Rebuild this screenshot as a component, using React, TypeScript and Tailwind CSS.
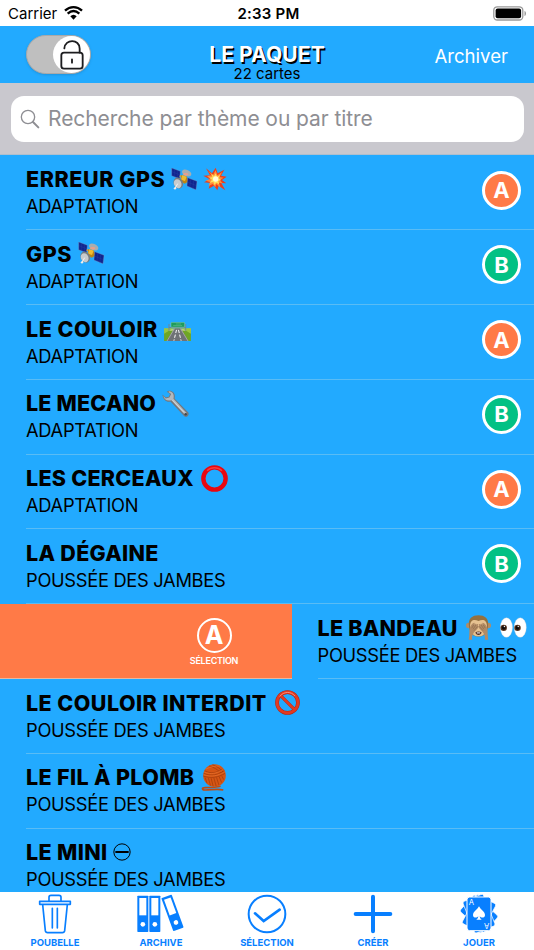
import React from 'react';

type Badge = 'A' | 'B';

type Card = {
  title: string;
  theme: string;
  icons?: React.ReactNode;
  badge?: Badge;
  swiped?: boolean;
  tracking: string;
};

const Satellite = () => (
  <svg className="ml-[6px] h-[23px] w-[27px] shrink-0" viewBox="0 0 81 69">
    <path d="M2 0 28 10 26 32 2 23Z" fill="#10248f" stroke="#8b94b5" strokeWidth="1" />
    <path d="M3 11 27 21M11 4v23M19 7v23" stroke="#2c46a8" strokeWidth="1" />
    <path d="m26 23 26 15" stroke="#c6a04a" strokeWidth="5" />
    <ellipse cx="47" cy="15" rx="15" ry="9" transform="rotate(25 47 15)" fill="#a9adb0" />
    <ellipse cx="44" cy="19" rx="8" ry="4" fill="#e9a18c" />
    <path d="m31 21 17 5 3 15-10 6-12-7Z" fill="#bd8413" />
    <path d="m34 21 13 5-5 13-12-4Z" fill="#efbb31" />
    <path d="M50 29 78 40 75 65 48 54Z" fill="#10248f" stroke="#8b94b5" strokeWidth="1" />
    <path d="m49 42 27 11M59 33l-2 24M68 37l-2 24" stroke="#2c46a8" strokeWidth="1" />
    <ellipse cx="22" cy="45" rx="14" ry="17" transform="rotate(-25 22 45)" fill="#777d80" />
    <ellipse cx="20" cy="47" rx="11" ry="14" transform="rotate(-25 20 47)" fill="#c8cbcd" />
    <path d="m20 47-8 14" stroke="#f3f3f3" strokeWidth="3" />
    <circle cx="12" cy="61" r="3.5" fill="#eee" />
  </svg>
);

const Boom = () => (
  <svg className="ml-[5px] h-[24px] w-[24px] shrink-0" viewBox="0 0 72 72">
    <path d="m9 4 18 15L38 2l6 17L64 8 54 26l17 3-14 10 13 10-15-1 12 22-20-14-4 14-10-14-16 9 5-17-19-2 17-9L1 26l20-1Z" fill="#ee3d1c" />
    <path d="m15 11 15 13 8-14 5 15 15-10-9 15 13 2-12 7 9 10-12-2 6 15-13-11-3 10-8-10-12 6 4-12-13-4 14-5-10-9 14-2Z" fill="#ff8d3a" />
    <path d="m25 19 8 9 5-9 4 10 10-5-6 10 9 5-9 3 3 10-9-5-6 7-3-9-11 2 7-9-8-6 9-2Z" fill="#ffdf5c" />
    <circle cx="38" cy="36" r="8" fill="#fffbdc" />
  </svg>
);

const Motorway = () => (
  <svg className="ml-[6px] mt-[5px] h-[19px] w-[27px] shrink-0" viewBox="0 0 82 58">
    <path d="M0 20h82v38H0Z" fill="#6fa626" />
    <path d="M0 20h82v7H0Z" fill="#b7cf7c" />
    <path d="M0 20h26L0 36ZM82 20H56l26 16Z" fill="#9bc641" />
    <path d="M31 20h20l24 38H7Z" fill="#6f7276" />
    <path d="m32 20-23 38M50 20l23 38" stroke="#c1c3bd" strokeWidth="2" />
    <path d="m38 24-8 33M44 24l8 33" stroke="#fff" strokeWidth="3" strokeDasharray="10 5" />
    <path d="M15 6v21M66 6v21M15 17h51" fill="none" stroke="#6e8795" strokeWidth="3" />
    <rect x="21" y="1" width="42" height="15" rx="2" fill="#1f9c5c" stroke="#9ad6bd" strokeWidth="1.5" />
    <path d="M36 6h16M28 11h27" stroke="#66bb8d" strokeWidth="2" />
  </svg>
);

const WrenchIcon = () => (
  <svg className="ml-[6px] h-[27px] w-[27px] shrink-0" viewBox="0 0 80 80">
    <path d="M20 2C33 1 41 12 37 25L78 67c4 8-5 16-12 11L25 34C13 37 3 28 1 13l10 9 9-2 4-8-10-7Z" fill="#73787e" />
    <path d="M21 4c11 1 16 10 13 22l39 42-5 5-40-43C15 34 6 28 4 18l7 7 11-3 5-10-8-6Z" fill="#b3b8bd" />
    <path d="m31 30 34 36" stroke="#d7dbdd" strokeWidth="2.5" />
    <circle cx="70" cy="72" r="3.5" fill="#44494d" />
  </svg>
);

const Ring = () => (
  <svg className="ml-[7px] h-[27px] w-[27px] shrink-0" viewBox="0 0 80 80">
    <circle cx="40" cy="40" r="33" fill="none" stroke="#e90710" strokeWidth="13" />
    <path d="M18 17C29 5 51 5 62 17" fill="none" stroke="#fa3b3b" strokeWidth="4" />
  </svg>
);

const Monkey = () => (
  <svg className="ml-[8px] h-[25px] w-[25px] shrink-0" viewBox="0 0 74 74">
    <circle cx="8" cy="31" r="8" fill="#b08d68" />
    <circle cx="66" cy="31" r="8" fill="#b08d68" />
    <path d="M9 34C5 10 19 1 37 1s32 9 28 33c-2 21-12 30-28 30S11 55 9 34Z" fill="#94703f" />
    <path d="M12 33c0-19 13-22 25-15 12-7 25-4 25 15 0 18-9 30-25 30S12 51 12 33Z" fill="#e6c291" />
    <path d="M8 73c3-14 1-25 3-34 3-9 8-15 13-16 3 0 2 4-1 7 5-6 9-5 7-1 4-4 8-2 5 3 3 0 3 4 0 7L24 51c-5 7-7 13-6 22Z" fill="#b28b65" />
    <path d="M66 73c-3-14-1-25-3-34-3-9-8-15-13-16-3 0-2 4 1 7-5-6-9-5-7-1-4-4-8-2-5 3-3 0-3 4 0 7l11 12c5 7 7 13 6 22Z" fill="#b28b65" />
    <path d="M23 29 17 39M29 30l-8 12M34 34 24 46M51 29l6 10M45 30l8 12M40 34l10 12" stroke="#80603f" strokeWidth="1.5" />
    <path d="M28 51c5-3 13-3 18 0-1 11-17 11-18 0Z" fill="#4f2b22" />
    <path d="M32 53h10" stroke="#fff" strokeWidth="3" />
  </svg>
);

const Eyes = () => (
  <svg className="ml-[9px] h-[21px] w-[27px] shrink-0" viewBox="0 0 80 62">
    <ellipse cx="19" cy="31" rx="18" ry="29" fill="#fff" stroke="#cbd0d1" />
    <ellipse cx="60" cy="31" rx="18" ry="29" fill="#fff" stroke="#cbd0d1" />
    <circle cx="11" cy="32" r="9.5" fill="#57321c" />
    <circle cx="52" cy="32" r="9.5" fill="#57321c" />
    <circle cx="11" cy="32" r="6" fill="#130b08" />
    <circle cx="52" cy="32" r="6" fill="#130b08" />
    <circle cx="13" cy="28" r="2" fill="#fff" />
    <circle cx="54" cy="28" r="2" fill="#fff" />
  </svg>
);

const Forbidden = () => (
  <svg className="ml-[8px] h-[25px] w-[25px] shrink-0" viewBox="0 0 74 74">
    <circle cx="37" cy="37" r="31" fill="none" stroke="#b8240f" strokeWidth="11" />
    <path d="m16 16 42 42" stroke="#b8240f" strokeWidth="9" />
    <circle cx="37" cy="37" r="31" fill="none" stroke="#e23a22" strokeWidth="8" />
    <path d="m16 16 42 42" stroke="#e23a22" strokeWidth="7" />
    <path d="M14 19C25 4 48 3 59 18" fill="none" stroke="#ff9b87" strokeWidth="2.5" />
  </svg>
);

const Yarn = () => (
  <svg className="ml-[7px] h-[27px] w-[26px] shrink-0" viewBox="0 0 77 80">
    <path d="M58 66c-14 4-34 4-46 4-10 0-10 6-2 7 18 1 36-5 56 0" fill="none" stroke="#c24a10" strokeWidth="5" />
    <circle cx="40" cy="34" r="33.5" fill="#d65514" />
    <path d="M11 20c18 10 34 6 52-4M8 28c22 9 42 5 61-8M7 36c24 7 44 4 64-8" fill="none" stroke="#9c380a" strokeWidth="2" />
    <path d="M22 42l6 22M30 42l6 24M38 41l7 25M46 40l7 22M54 38l7 17M62 36l5 10M12 40l6 17" fill="none" stroke="#9c380a" strokeWidth="2" />
    <path d="M24 6c12 3 26 10 38 24M34 2c12 4 24 12 33 24" fill="none" stroke="#9c380a" strokeWidth="2" />
    <path d="M14 15C29 8 44 5 56 6M10 24c20 8 36 4 54-7M9 32c22 7 42 3 61-9" fill="none" stroke="#e8742f" strokeWidth="2" />
  </svg>
);

const MinusCircle = () => (
  <svg className="ml-[6px] h-[18px] w-[18px] shrink-0" viewBox="0 0 54 54">
    <circle cx="27" cy="27" r="24.5" fill="none" stroke="#000" strokeWidth="3" />
    <path d="M7 27h40" stroke="#000" strokeWidth="6" />
  </svg>
);

const cards: Card[] = [
  { title: 'ERREUR GPS', theme: 'ADAPTATION', badge: 'A', icons: <><Satellite /><Boom /></>, tracking: 'tracking-[0.56px]' },
  { title: 'GPS', theme: 'ADAPTATION', badge: 'B', icons: <Satellite />, tracking: 'tracking-[0.5px]' },
  { title: 'LE COULOIR', theme: 'ADAPTATION', badge: 'A', icons: <Motorway />, tracking: 'tracking-[0.5px]' },
  { title: 'LE MECANO', theme: 'ADAPTATION', badge: 'B', icons: <WrenchIcon />, tracking: 'tracking-[0.2px]' },
  { title: 'LES CERCEAUX', theme: 'ADAPTATION', badge: 'A', icons: <Ring />, tracking: 'tracking-[0.26px]' },
  { title: 'LA DÉGAINE', theme: 'POUSSÉE DES JAMBES', badge: 'B', tracking: 'tracking-[0.3px]' },
  { title: 'LE BANDEAU', theme: 'POUSSÉE DES JAMBES', swiped: true, icons: <><Monkey /><Eyes /></>, tracking: 'tracking-[0.25px]' },
  { title: 'LE COULOIR INTERDIT', theme: 'POUSSÉE DES JAMBES', icons: <Forbidden />, tracking: 'tracking-[0.45px]' },
  { title: 'LE FIL À PLOMB', theme: 'POUSSÉE DES JAMBES', icons: <Yarn />, tracking: 'tracking-[0.35px]' },
  { title: 'LE MINI', theme: 'POUSSÉE DES JAMBES', icons: <MinusCircle />, tracking: 'tracking-[0.35px]' },
];

const badgeColors = {
  A: 'bg-[#ff7a47]',
  B: 'bg-[#02c184]',
};

const CardRow = ({ card }: { card: Card }) => (
  <div className="flex h-[74.8px] shrink-0 overflow-hidden">
    {card.swiped && (
      <div className="flex w-[291.5px] shrink-0 justify-end border-b border-[#e9b79f] bg-[#ff7a47]">
        <div className="mr-[51px] mt-[14px] flex w-[53px] flex-col items-center text-white">
          <div className="flex h-[35px] w-[35px] items-center justify-center rounded-full border-2 border-white text-[25px] font-bold leading-none">A</div>
          <span className="mt-[2px] text-[9px] font-semibold leading-[11px] tracking-[-0.25px]">SÉLECTION</span>
        </div>
      </div>
    )}
    <div className="ml-[26px] flex min-w-0 flex-1 border-b border-[#59bcf5]">
      <div className="flex flex-col pt-[9.5px]">
        <div className="flex h-[28px] items-center">
          <span className={`whitespace-nowrap text-[21.5px] font-extrabold leading-[28px] ${card.tracking}`}>{card.title}</span>
          {card.icons}
        </div>
        <span className="whitespace-nowrap text-[18.3px] leading-[26px] tracking-[-0.3px]">{card.theme}</span>
      </div>
      {card.badge && (
        <div className={`ml-auto mr-[13px] mt-[15px] flex h-[39px] w-[39px] items-center justify-center rounded-full border-3 border-white text-[22px] font-bold leading-none text-white ${badgeColors[card.badge]}`}>
          {card.badge}
        </div>
      )}
    </div>
  </div>
);

const StatusBar = () => (
  <div className="grid h-[26px] shrink-0 grid-cols-3 items-center bg-white pl-[8px] pr-[7px]">
    <div className="flex items-center text-[15px] leading-none">
      <span>Carrier</span>
      <svg className="ml-[7px] h-[14px] w-[19px]" viewBox="0 0 57 42">
        <path d="M3 14C18 0 39 0 54 14" fill="none" stroke="#000" strokeWidth="7" />
        <path d="M11 23c11-10 24-10 35 0" fill="none" stroke="#000" strokeWidth="7" />
        <path d="M19 31c6-6 13-6 19 0l-9.5 10Z" fill="#000" />
      </svg>
    </div>
    <span className="pl-[2px] text-center text-[15px] font-semibold leading-none tracking-[0.2px]">2:33 PM</span>
    <svg className="ml-auto h-[15px] w-[34px]" viewBox="0 0 34 15">
      <rect x="0.8" y="0.8" width="29" height="13.2" rx="3.5" fill="#fff" stroke="#999" strokeWidth="1.3" />
      <rect x="2.6" y="2.6" width="25.5" height="9.6" rx="2" fill="#000" />
      <path d="M31.5 5c2 .5 2 4.5 0 5Z" fill="#999" />
    </svg>
  </div>
);

const NavBar = () => (
  <div className="grid h-[57px] shrink-0 grid-cols-3 bg-[#22aaff] pl-[26px] pr-[26px]">
    <div className="mt-[9px] flex h-[39px] w-[65px] justify-end rounded-full border border-[#aaa9a8] bg-[#bfbfbf] shadow-sm">
      <div className="flex h-[37px] w-[37px] items-center justify-center rounded-full bg-white">
        <svg className="h-[30px] w-[24px]" viewBox="0 0 72 90" fill="none" stroke="#1d1d1f" strokeWidth="5.5" strokeLinecap="round">
          <rect x="4" y="38" width="64" height="48" rx="8" />
          <path d="M13 25C15-4 59-4 59 26v12M36 58v10" />
        </svg>
      </div>
    </div>
    <div className="flex flex-col items-center pt-[17px]">
      <span className="whitespace-nowrap text-[21px] font-bold leading-[24px] tracking-[0.1px] text-white [text-shadow:1.5px_1.5px_0_#000]">LE PAQUET</span>
      <span className="-mt-px text-[15px] leading-[15px]">22 cartes</span>
    </div>
    <span className="mt-[17px] text-right text-[18.6px] leading-[26px] text-white">Archiver</span>
  </div>
);

const SearchBar = () => (
  <div className="h-[72px] shrink-0 border-b border-[#aebfce] bg-[#c9c8ce] px-[10.5px] pt-[12.5px]">
    <div className="flex h-[46px] items-center rounded-[13px] bg-white pl-[9.5px]">
      <svg className="h-[20px] w-[20px] shrink-0" viewBox="0 0 60 60" fill="none" stroke="#8e8e93">
        <circle cx="24" cy="24" r="20" strokeWidth="4" />
        <path d="m39 39 16 16" strokeWidth="6" strokeLinecap="round" />
      </svg>
      <span className="ml-[8px] whitespace-nowrap text-[21px] tracking-[-0.08px] text-[#8e8e93]">Recherche par thème ou par titre</span>
    </div>
  </div>
);

const TrashIcon = () => (
  <svg className="h-[40px] w-[34px]" viewBox="0 0 102 120" fill="none" stroke="#087fff" strokeWidth="5" strokeLinecap="round" strokeLinejoin="round">
    <path d="M5 22h92v9H5ZM33 20V10q0-6 6-6h24q6 0 6 6v10M14 32l8 78q1 6 7 6h44q6 0 7-6l8-78M43 43v59M58 43v59" />
  </svg>
);

const BindersIcon = () => (
  <svg className="h-[40px] w-[48px]" viewBox="0 0 144 120">
    <rect x="1" y="5" width="33" height="109" rx="2" fill="#087fff" />
    <rect x="7" y="12" width="21" height="52" fill="#fff" />
    <circle cx="17.5" cy="91" r="7" fill="#fff" />
    <rect x="37" y="5" width="33" height="109" rx="2" fill="#087fff" />
    <rect x="43" y="12" width="21" height="52" fill="#fff" />
    <circle cx="53.5" cy="91" r="7" fill="#fff" />
    <g transform="translate(73 13) rotate(-20)">
      <rect width="33" height="105" rx="2" fill="#087fff" />
      <rect x="6" y="7" width="21" height="50" fill="#fff" />
      <circle cx="16.5" cy="83" r="7" fill="#fff" />
    </g>
  </svg>
);

const CheckIcon = () => (
  <svg className="h-[40px] w-[40px]" viewBox="0 0 120 120" fill="none" stroke="#087fff" strokeLinecap="round">
    <circle cx="60" cy="60" r="55" strokeWidth="6" />
    <path d="m24 58 26 23 48-34" strokeWidth="8" />
  </svg>
);

const PlusIcon = () => (
  <svg className="h-[40px] w-[40px]" viewBox="0 0 120 120" fill="none" stroke="#087fff" strokeWidth="12" strokeLinecap="round">
    <path d="M60 8v104M8 60h104" />
  </svg>
);

const DeckIcon = () => (
  <svg className="h-[42px] w-[42px]" viewBox="0 0 126 126">
    <g fill="#087fff" stroke="#fff" strokeWidth="2">
      <rect x="30" y="13" width="66" height="98" rx="6" transform="rotate(-48 63 62)" />
      <rect x="30" y="13" width="66" height="98" rx="6" transform="rotate(28 63 62)" />
      <rect x="30" y="11" width="66" height="102" rx="6" transform="rotate(-22 63 62)" />
      <rect x="27" y="12" width="72" height="101" rx="8" strokeWidth="3" />
    </g>
    <path d="M63 40c-4 9-18 16-18 26 0 9 11 10 16 4-1 6-3 8-6 10h16c-3-2-5-4-6-10 5 6 16 5 16-4 0-10-14-17-18-26Z" fill="#fff" />
    <text x="32" y="35" fill="#fff" fontSize="23" fontFamily="Inter, sans-serif">A</text>
    <text x="-94" y="-89" fill="#fff" fontSize="23" fontFamily="Inter, sans-serif" transform="rotate(180)">A</text>
  </svg>
);

const tabs = [
  { label: 'POUBELLE', icon: <TrashIcon /> },
  { label: 'ARCHIVE', icon: <BindersIcon /> },
  { label: 'SÉLECTION', icon: <CheckIcon /> },
  { label: 'CRÉER', icon: <PlusIcon /> },
  { label: 'JOUER', icon: <DeckIcon /> },
];

const TabBar = () => (
  <div className="flex h-[58px] shrink-0 justify-center bg-white text-[#087fff]">
    {tabs.map((tab) => (
      <button key={tab.label} className="flex w-[106px] flex-col items-center">
        <div className="mt-[1px] flex h-[42px] items-center justify-center">{tab.icon}</div>
        <span className="mt-[2px] text-[9.5px] font-bold leading-[12px]">{tab.label}</span>
      </button>
    ))}
  </div>
);

const App = () => {
  return (
    <div className="flex h-[950px] w-[534px] flex-col overflow-hidden bg-[#22aaff] font-['Inter',sans-serif] text-black">
      <StatusBar />
      <NavBar />
      <SearchBar />
      <div className="flex min-h-0 flex-1 flex-col overflow-hidden pt-[0.5px]">
        {cards.map((card) => (
          <CardRow key={card.title} card={card} />
        ))}
      </div>
      <TabBar />
    </div>
  );
};

export default App;
